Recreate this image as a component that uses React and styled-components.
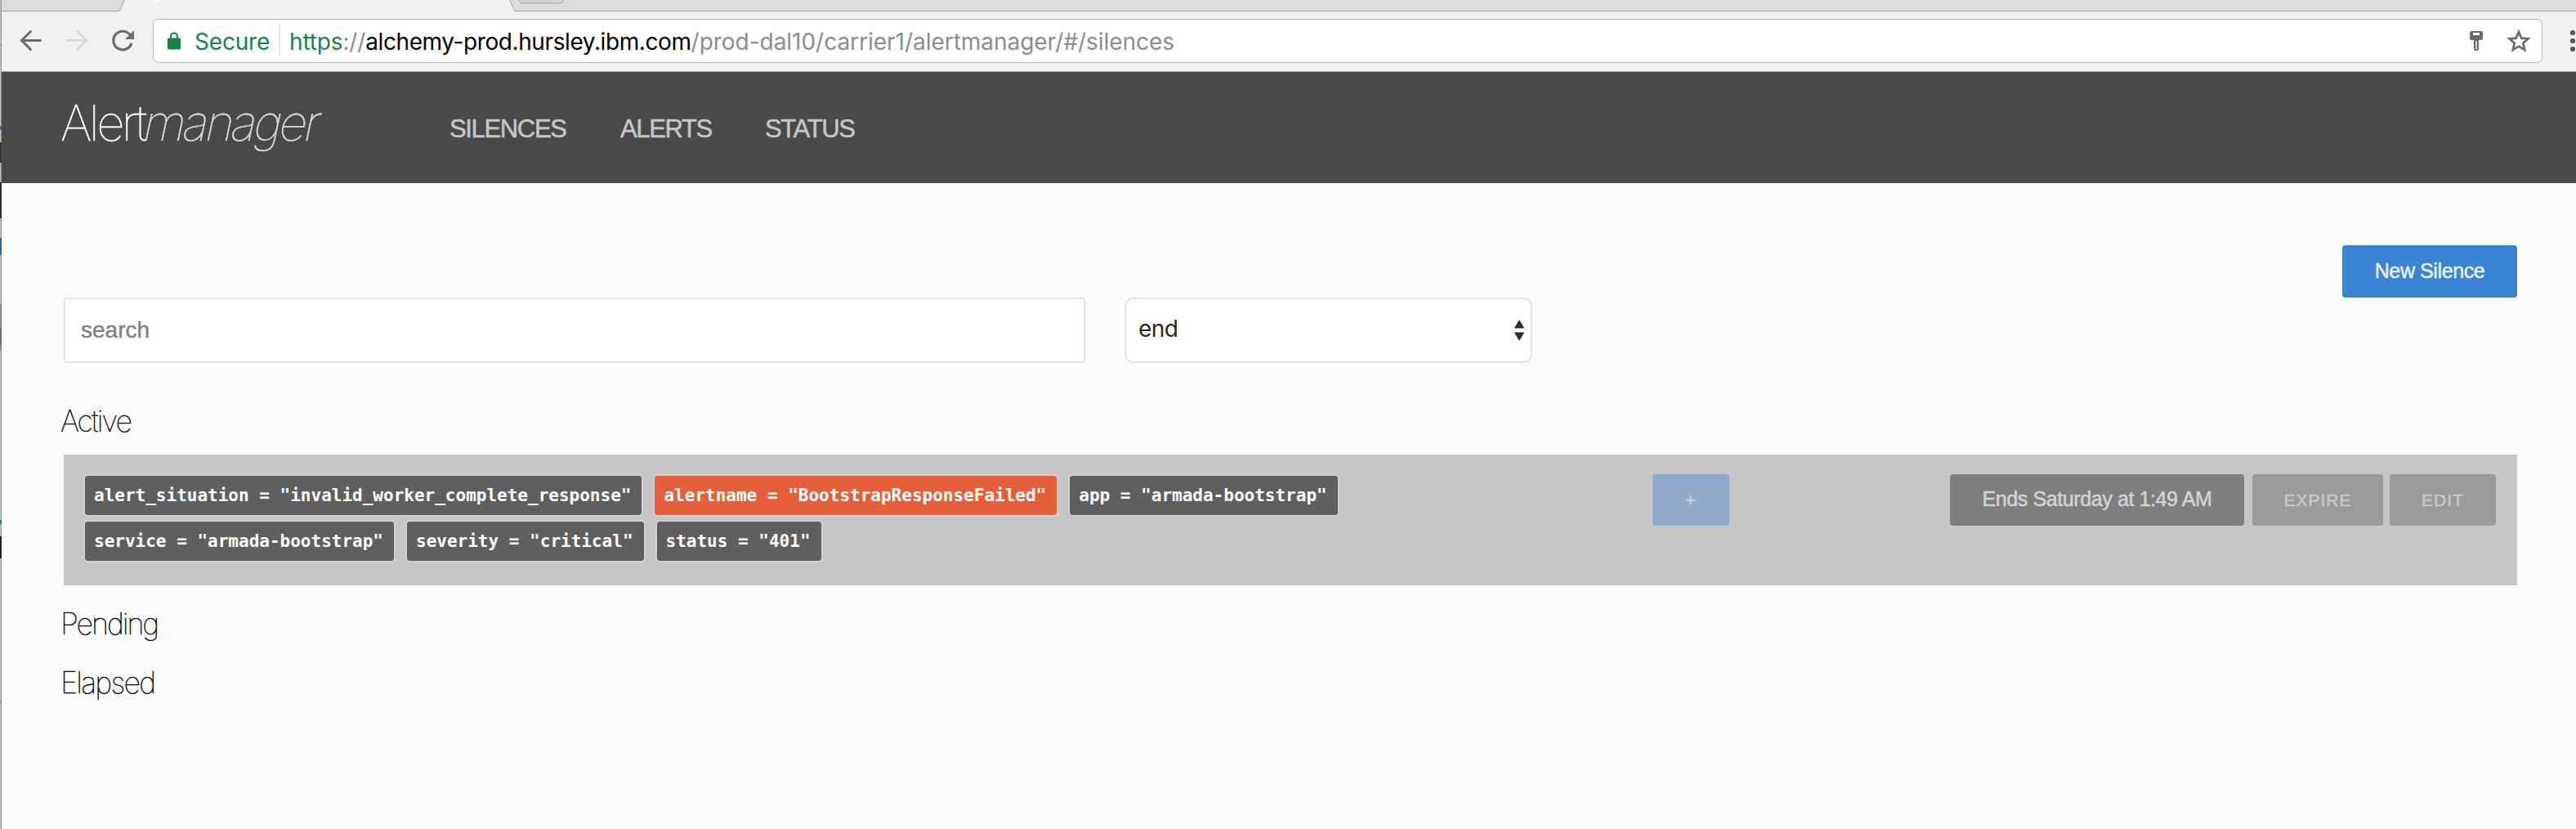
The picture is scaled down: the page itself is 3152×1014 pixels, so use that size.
import React from "react";
import styled, { createGlobalStyle } from "styled-components";

const sans = `"Liberation Sans", Arial, sans-serif`;
const inter = `Inter, "Liberation Sans", sans-serif`;

const GlobalStyle = createGlobalStyle`
  * { box-sizing: border-box; }
  body { margin: 0; background: #fbfbfb; font-family: ${sans}; overflow: hidden; }
  button, input { font-family: inherit; margin: 0; }
`;

const Screen = styled.div`
  display: flex;
  width: 3152px;
  height: 1014px;
  overflow: hidden;
`;

const DesktopEdge = styled.div`
  flex: none;
  width: 2px;
  border-right: 1px solid rgba(90, 90, 90, 0.42);
  background: linear-gradient(
    #c0c0c0 0 54px, #c08880 54px 56px, #bdbdbd 56px 154px,
    #1e78a0 154px 159px, #bdbdbd 159px 174px, #30302c 174px 199px,
    #bdbdbd 199px 223px, #242424 223px 267px, #bdbdbd 267px 291px,
    #2a65ac 291px 312px, #bdbdbd 312px 372px, #949494 372px 401px,
    #707070 401px 422px, #949494 422px 429px, #bdbdbd 429px 636px,
    #1e78a0 636px 641px, #bdbdbd 641px 656px, #161616 656px 683px,
    #bdbdbd 683px 857px, #c08880 857px 860px, #bdbdbd 860px 1014px
  );
`;

const Window = styled.div`
  flex: 1;
  min-width: 0;
  display: flex;
  flex-direction: column;
  background: #fbfbfb;
`;

const TabStrip = styled.svg`
  display: block;
  flex: none;
`;

const Toolbar = styled.div`
  flex: none;
  display: flex;
  align-items: flex-start;
  height: 74px;
  padding: 9px 0 0 20px;
  background: #f1f1f1;
  border-bottom: 1px solid #a3a3a3;
`;

const NavIcon = styled.svg`
  flex: none;
  width: 36px;
  height: 36px;
  margin: 9px 20px 0 0;
`;

const AddressBar = styled.div`
  flex: none;
  display: flex;
  align-items: center;
  width: 2924px;
  height: 54px;
  margin-left: -3px;
  border: 1px solid #b3b3b3;
  border-radius: 7px;
  background: #fff;
  font: 400 28px/52px ${inter};
  white-space: nowrap;
`;

const Lock = styled.svg`
  margin: 0 16px 0 16px;
`;

const Secure = styled.span`
  color: #178246;
  width: 103px;
  padding-top: 2px;
  letter-spacing: -0.2px;
`;

const UrlPart = styled.span`
  color: ${(p) => p.$color};
  letter-spacing: ${(p) => p.$spacing || 0}px;
`;

const Url = styled.div`
  flex: 1;
  height: 40px;
  line-height: 42px;
  padding-left: 11px;
  border-left: 2px solid #e8e8e8;
`;

const BarIcons = styled.div`
  display: flex;
  align-items: center;
  gap: 29px;
  padding-right: 13px;
`;

const Dots = styled.svg`
  flex: none;
  margin: 12px 0 0 33px;
`;

const Header = styled.header`
  flex: none;
  display: flex;
  align-items: center;
  height: 136px;
  padding-left: 72px;
  background: #494949;
`;

const Logo = styled.div`
  display: flex;
  width: 476px;
  padding-bottom: 12px;
  font: 100 60px/72px ${inter};
  letter-spacing: -3.6px;
  color: #fff;
  -webkit-text-stroke: 0.5px #fff;
`;

const LogoTail = styled.span`
  color: #dadada;
  letter-spacing: -3.8px;
  transform: skewX(-12deg);
  -webkit-text-stroke: 0.5px #dadada;
`;

const Nav = styled.nav`
  display: flex;
  padding-top: 3px;
`;

const NavLink = styled.a`
  width: ${(p) => p.$width}px;
  font-size: 31px;
  line-height: 40px;
  letter-spacing: -1.35px;
  color: #c6c6c6;
  -webkit-text-stroke: 0.5px #c6c6c6;
`;

const Main = styled.main`
  display: flex;
  flex-direction: column;
  padding: 76px 72px 0 76px;
`;

const Button = styled.button`
  display: flex;
  align-items: center;
  justify-content: center;
  flex: none;
  width: ${(p) => p.$width}px;
  height: ${(p) => p.$height || 63}px;
  padding: 0 0 2px;
  border: 0;
  border-radius: 4px;
  background: ${(p) => p.$bg};
  color: ${(p) => p.$color};
  font-size: 25px;
  letter-spacing: -0.4px;
  white-space: nowrap;
  -webkit-text-stroke: 0.5px ${(p) => p.$color};
`;

const SmallButton = styled(Button)`
  padding: 1px 0 0;
  font-size: 21px;
  letter-spacing: 1px;
`;

const Actions = styled.div`
  display: flex;
  justify-content: flex-end;
`;

const Filters = styled.div`
  display: flex;
  gap: 49px;
`;

const SearchInput = styled.input`
  width: 1250px;
  height: 80px;
  padding: 0 19px;
  border: 2px solid #e3e3e3;
  border-radius: 4px;
  background: #fff;
  font-size: 28px;
  outline: 0;
  &::placeholder {
    color: #7f7f7f;
    opacity: 1;
    -webkit-text-stroke: 0.4px #7f7f7f;
  }
`;

const SortSelect = styled.div`
  display: flex;
  align-items: center;
  justify-content: space-between;
  width: 499px;
  height: 80px;
  margin-left: -1px;
  padding: 0 7px 0 15px;
  border: 2px solid #e3e3e3;
  border-radius: 11px;
  background: #fff;
  color: #262626;
  font: 400 28px/36px ${inter};
`;

const SortValue = styled.span`
  padding-bottom: 4px;
  letter-spacing: -0.6px;
`;

const SectionTitle = styled.h3`
  margin: ${(p) => p.$top}px 0 0 -4px;
  font: 100 36px/40px ${inter};
  letter-spacing: ${(p) => p.$spacing}px;
  color: #000;
  -webkit-text-stroke: 0.45px #000;
`;

const SilenceCard = styled.section`
  display: flex;
  align-items: flex-start;
  height: 160px;
  margin-top: 21px;
  padding: 24px 26px 0 24px;
  background: #c6c6c6;
`;

const Tags = styled.div`
  display: flex;
  flex-wrap: wrap;
  gap: 4px 12px;
  width: 1800px;
`;

const Tag = styled.span`
  height: 52px;
  padding: 0 13px 0 11px;
  border: 2px solid #d0d0d0;
  border-radius: 5px;
  background: ${(p) => (p.$highlight ? "#e65f3c" : "#5f5f5f")};
  background-clip: padding-box;
  color: #fff;
  font: 700 21px/48px "DejaVu Sans Mono", Menlo, monospace;
  white-space: pre;
`;

const AddSlot = styled.div`
  flex: 1;
  padding-left: 120px;
`;

const CardActions = styled.div`
  display: flex;
  gap: 8px;
`;

const EndsButton = styled(Button)`
  margin-right: 2px;
`;

const MATCHERS = [
  ["alert_situation", "invalid_worker_complete_response"],
  ["alertname", "BootstrapResponseFailed"],
  ["app", "armada-bootstrap"],
  ["service", "armada-bootstrap"],
  ["severity", "critical"],
  ["status", "401"],
];

function Tabs() {
  return (
    <TabStrip width="3150" height="14" viewBox="2 0 3150 14">
      <rect x="2" width="3150" height="14" fill="#f1f1f1" />
      <path d="M2 0H152.500L146 13.500H2Z" fill="#dcdcdc" />
      <path d="M2 13.500H146L152.500 0" fill="none" stroke="#9f9f9f" />
      <path d="M623.500 0L630 13.500H3152V0Z" fill="#dcdcdb" />
      <path d="M623.500 0L630 13.500H3152" fill="none" stroke="#9f9f9f" />
      <path d="M635 0C636 3 637 4 640 4H685Q689 4 689 0" fill="#d2d2d2" stroke="#a4a4a4" />
      <circle cx="194" cy="-6" r="8" fill="#fff" />
    </TabStrip>
  );
}

function BrowserBar() {
  return (
    <Toolbar>
      <NavIcon viewBox="22 32 36 36" fill="none" stroke="#6b6b6b" strokeWidth="3" strokeLinecap="round">
        <path d="M49.500 49.500H27M37.500 38.500L26.500 49.500L37.500 60.500" />
      </NavIcon>
      <NavIcon viewBox="78 32 36 36" fill="none" stroke="#d8d8d8" strokeWidth="3" strokeLinecap="round">
        <path d="M82.500 49.500H105M94.500 38.500L105.500 49.500L94.500 60.500" />
      </NavIcon>
      <NavIcon viewBox="134 32 36 36">
        <path d="M158.500 42A11.300 11.300 0 1 0 160.500 54" fill="none" stroke="#6b6b6b" strokeWidth="3.200" strokeLinecap="round" />
        <path d="M164 37V48H153Z" fill="#6b6b6b" />
      </NavIcon>
      <AddressBar>
        <Lock width="18" height="22" viewBox="0 0 18 22">
          <path d="M5 8V5.500a4 4 0 0 1 8 0V8" fill="none" stroke="#178246" strokeWidth="2" />
          <rect x="1" y="7.500" width="16" height="14" rx="1.500" fill="#178246" />
        </Lock>
        <Secure>Secure</Secure>
        <Url>
          <UrlPart $color="#178246" $spacing={-0.15}>https</UrlPart>
          <UrlPart $color="#8c8c8c" $spacing={-0.15}>://</UrlPart>
          <UrlPart $color="#000" $spacing={-0.4}>alchemy-prod.hursley.ibm.com</UrlPart>
          <UrlPart $color="#8c8c8c" $spacing={-0.03}>/prod-dal10/carrier1/alertmanager/#/silences</UrlPart>
        </Url>
        <BarIcons>
          <svg width="16" height="24" viewBox="0 0 16 24">
            <path fillRule="evenodd" fill="#6b6b6b" d="M2 0H14Q16 0 16 2V9Q16 11 14 11H11V22L9.500 24H6.500L5 22V11H2Q0 11 0 9V2Q0 0 2 0ZM4 2V5H12V2ZM7.300 12V22H8.700V12Z" />
          </svg>
          <svg width="30" height="30" viewBox="0 0 30 30">
            <path d="M15 4L18.300 11.700L26.500 12.400L20.300 17.800L22.200 26L15 21.700L7.800 26L9.700 17.800L3.500 12.400L11.700 11.700Z" fill="none" stroke="#6b6b6b" strokeWidth="2.700" />
          </svg>
        </BarIcons>
      </AddressBar>
      <Dots width="8" height="30" viewBox="0 0 8 30" fill="#595959">
        <circle cx="4" cy="5" r="3.100" />
        <circle cx="4" cy="15" r="3.100" />
        <circle cx="4" cy="25" r="3.100" />
      </Dots>
    </Toolbar>
  );
}

export default function App() {
  return (
    <Screen>
      <GlobalStyle />
      <DesktopEdge />
      <Window>
        <Tabs />
        <BrowserBar />
        <Header>
          <Logo>
            Alert<LogoTail>manager</LogoTail>
          </Logo>
          <Nav>
            <NavLink $width={209}>SILENCES</NavLink>
            <NavLink $width={177}>ALERTS</NavLink>
            <NavLink $width={130}>STATUS</NavLink>
          </Nav>
        </Header>
        <Main>
          <Actions>
            <Button $width={214} $height={64} $bg="#3b84d4" $color="#e9f0fa">New Silence</Button>
          </Actions>
          <Filters>
            <SearchInput placeholder="search" />
            <SortSelect>
              <SortValue>end</SortValue>
              <svg width="14" height="26" viewBox="0 0 14 26" fill="#2b2b2b">
                <path d="M7 0L13.200 10.500H0.800Z" />
                <path d="M7 26L13.200 15.500H0.800Z" />
              </svg>
            </SortSelect>
          </Filters>
          <SectionTitle $top={51} $spacing={-1.9}>Active</SectionTitle>
          <SilenceCard>
            <Tags>
              {MATCHERS.map(([name, value]) => (
                <Tag key={name} $highlight={name === "alertname"}>{`${name} = "${value}"`}</Tag>
              ))}
            </Tags>
            <AddSlot>
              <SmallButton $width={94} $bg="#92aacb" $color="#d2d6db">+</SmallButton>
            </AddSlot>
            <CardActions>
              <EndsButton $width={360} $bg="#7e7e7e" $color="#d4d4d4">Ends Saturday at 1:49 AM</EndsButton>
              <SmallButton $width={160} $bg="#9a9a9a" $color="#c9c9c9">EXPIRE</SmallButton>
              <SmallButton $width={130} $bg="#9a9a9a" $color="#c9c9c9">EDIT</SmallButton>
            </CardActions>
          </SilenceCard>
          <SectionTitle $top={27} $spacing={-2.1}>Pending</SectionTitle>
          <SectionTitle $top={32} $spacing={-1.8}>Elapsed</SectionTitle>
        </Main>
      </Window>
    </Screen>
  );
}
